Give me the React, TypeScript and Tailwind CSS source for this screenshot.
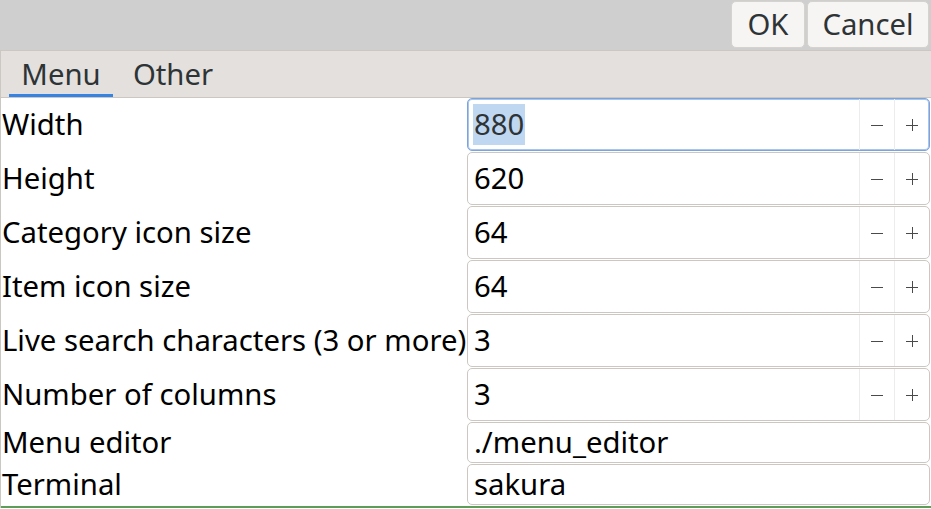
const spinRows = [
  { label: "Width", value: "880", focused: true },
  { label: "Height", value: "620" },
  { label: "Category icon size", value: "64" },
  { label: "Item icon size", value: "64" },
  { label: "Live search characters (3 or more)", value: "3" },
  { label: "Number of columns", value: "3" },
];

const entryRows = [
  { label: "Menu editor", value: "./menu_editor" },
  { label: "Terminal", value: "sakura" },
];

function SpinBox({ value, focused }: { value: string; focused?: boolean }) {
  return (
    <div
      className={`flex h-[53px] rounded-[5px] border bg-white ${
        focused ? "border-[#7ca4dc] shadow-[inset_0_0_0_1px_#a9c5ea]" : "border-[#cdc7c2]"
      }`}
    >
      <div className="flex flex-1 items-center pl-[5px]">
        <span className={focused ? "bg-[#c0d7f2] px-px py-[6px] text-[#2e3436]" : "px-px text-black"}>{value}</span>
      </div>
      <div className="flex w-[35px] items-center justify-center border-l border-[#ececec]">
        <svg width="12" height="12" viewBox="0 0 12 12">
          <path d="M0 6.5h12" stroke="#4a4a4a" strokeWidth="1" />
        </svg>
      </div>
      <div className="flex w-[35px] items-center justify-center border-l border-[#ececec]">
        <svg width="12" height="12" viewBox="0 0 12 12">
          <path d="M0 6.5h12M6.5 0v12" stroke="#4a4a4a" strokeWidth="1" />
        </svg>
      </div>
    </div>
  );
}

export default function App() {
  return (
    <div className="h-[509px] w-[931px] overflow-hidden bg-white font-['Noto_Sans',sans-serif] text-[29.3px] leading-none">
      <div className="flex h-[50px] items-start justify-end gap-[2px] bg-[#cfcfcf] pr-[2px] pt-px">
        <button className="h-[47px] w-[74px] rounded-[5px] border border-[#d6d2ce] bg-[#f6f5f4] text-[#2e3436]">OK</button>
        <button className="h-[47px] w-[122px] rounded-[5px] border border-[#d6d2ce] bg-[#f6f5f4] text-[#2e3436]">Cancel</button>
      </div>

      <div className="border-l border-[#cdc7c2]">
        <div className="flex h-[48px] items-end gap-[8px] border-b border-t border-[#cdc7c2] bg-[#e3e0dd] pl-[8px]">
          <div className="flex h-[46px] w-[104px] items-center justify-center border-b-[3px] border-[#3584e4] pt-[4px] text-[#2e3436]">
            Menu
          </div>
          <div className="flex h-[46px] w-[104px] items-center justify-center border-b-[3px] border-transparent pt-[4px] text-[#2e3436]">
            Other
          </div>
        </div>

        <div className="grid grid-cols-[465px_1fr] gap-y-px pl-px pr-px text-black">
          {spinRows.map((r) => (
            <div key={r.label} className="contents">
              <div className="flex items-center whitespace-nowrap">{r.label}</div>
              <SpinBox value={r.value} focused={r.focused} />
            </div>
          ))}
          {entryRows.map((r) => (
            <div key={r.label} className="contents">
              <div className="flex items-center whitespace-nowrap">{r.label}</div>
              <div className="flex h-[41px] items-center rounded-[5px] border border-[#cdc7c2] bg-white pl-[6px]">{r.value}</div>
            </div>
          ))}
        </div>
        <div className="mt-px h-[2px] bg-[#5a9e5a]" />
      </div>
    </div>
  );
}
